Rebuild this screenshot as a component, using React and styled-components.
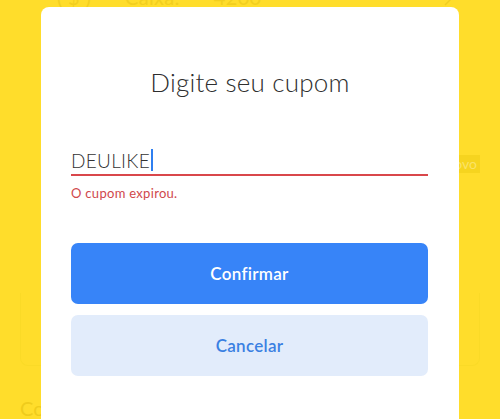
import React from "react";
import styled, { createGlobalStyle } from "styled-components";

const GlobalStyle = createGlobalStyle`
  html, body {
    margin: 0;
    padding: 0;
    background: #ffdd2b;
    overflow: hidden;
    font-family: "Lato", "Open Sans", sans-serif;
  }
`;

const App = () => {
  return (
    <>
      <GlobalStyle />
      <Screen>
        <Page>
          <TopRow>
            <Faint>( $ )</Faint>
            <Faint>Caixa:</Faint>
            <Faint>4200</Faint>
            <Chevron width="12" height="12" viewBox="0 0 12 12">
              <path d="M2 10 L8 4" stroke="#f0cd1f" strokeWidth="1.4" fill="none" />
            </Chevron>
          </TopRow>
          <ActionRow>
            <GhostButton>Novo</GhostButton>
          </ActionRow>
          <Card />
          <FaintTitle>Cobranças</FaintTitle>
        </Page>

        <Modal>
          <Title>Digite seu cupom</Title>
          <Field>
            <FieldValue>
              DEULIKE
              <Caret />
            </FieldValue>
          </Field>
          <ErrorText>O cupom expirou.</ErrorText>
          <Actions>
            <Button primary>Confirmar</Button>
            <Button>Cancelar</Button>
          </Actions>
        </Modal>
      </Screen>
    </>
  );
};

const Screen = styled.div`
  position: relative;
  width: 500px;
  height: 419px;
  overflow: hidden;
  background: #ffdd2b;
`;

const Page = styled.div`
  display: flex;
  flex-direction: column;
  padding: 0 20px;
`;

const TopRow = styled.div`
  display: flex;
  align-items: center;
  height: 24px;
  margin-top: -15px;
  padding-left: 37px;
  gap: 34px;
`;

const Faint = styled.span`
  font-size: 20px;
  color: #f2cf1f;
  letter-spacing: 0.3px;
`;

const Chevron = styled.svg`
  margin-left: auto;
  margin-right: 25px;
  margin-top: 8px;
`;

const ActionRow = styled.div`
  display: flex;
  justify-content: flex-end;
  margin-top: 146px;
`;

const GhostButton = styled.div`
  background: #f6d41f;
  color: #fbe366;
  font-size: 14px;
  padding: 0 3px;
  height: 18px;
  line-height: 18px;
  width: 40px;
  text-align: right;
`;

const Card = styled.div`
  margin-top: 120px;
  height: 72px;
  border: 1px solid #fada27;
  border-top: none;
  border-radius: 0 0 8px 8px;
`;

const FaintTitle = styled.div`
  margin-top: 30px;
  font-size: 20px;
  color: #efcc1c;
`;

const Modal = styled.div`
  position: absolute;
  top: 7px;
  left: 41px;
  width: 418px;
  height: 440px;
  box-sizing: border-box;
  background: #ffffff;
  border-radius: 8px;
  padding: 61px 30px 0;
  display: flex;
  flex-direction: column;
`;

const Title = styled.h2`
  margin: 0;
  text-align: center;
  font-weight: 300;
  font-size: 26px;
  line-height: 28px;
  color: #2e2e2e;
  letter-spacing: 0.2px;
`;

const Field = styled.div`
  margin-top: 52px;
  border-bottom: 2px solid #d9474b;
  padding-bottom: 2px;
  margin-right: 1px;
`;

const FieldValue = styled.div`
  display: flex;
  align-items: center;
  font-size: 19px;
  font-weight: 300;
  color: #333333;
  height: 24px;
  letter-spacing: 0.3px;
`;

const Caret = styled.span`
  display: inline-block;
  width: 2px;
  height: 22px;
  background: #2f7ff0;
  margin-left: 1px;
`;

const ErrorText = styled.div`
  margin-top: 9px;
  font-size: 13px;
  color: #d0484b;
  letter-spacing: 0.3px;
`;

const Actions = styled.div`
  display: flex;
  flex-direction: column;
  gap: 11px;
  margin-top: 42px;
  margin-right: 1px;
`;

const Button = styled.button`
  height: 61px;
  border: none;
  border-radius: 7px;
  font-family: "Lato", "Open Sans", sans-serif;
  font-size: 17px;
  font-weight: 600;
  letter-spacing: 0.3px;
  background: ${props => (props.primary ? "#3784f8" : "#e2ecfb")};
  color: ${props => (props.primary ? "#ffffff" : "#3a80e2")};
`;

export default App;
